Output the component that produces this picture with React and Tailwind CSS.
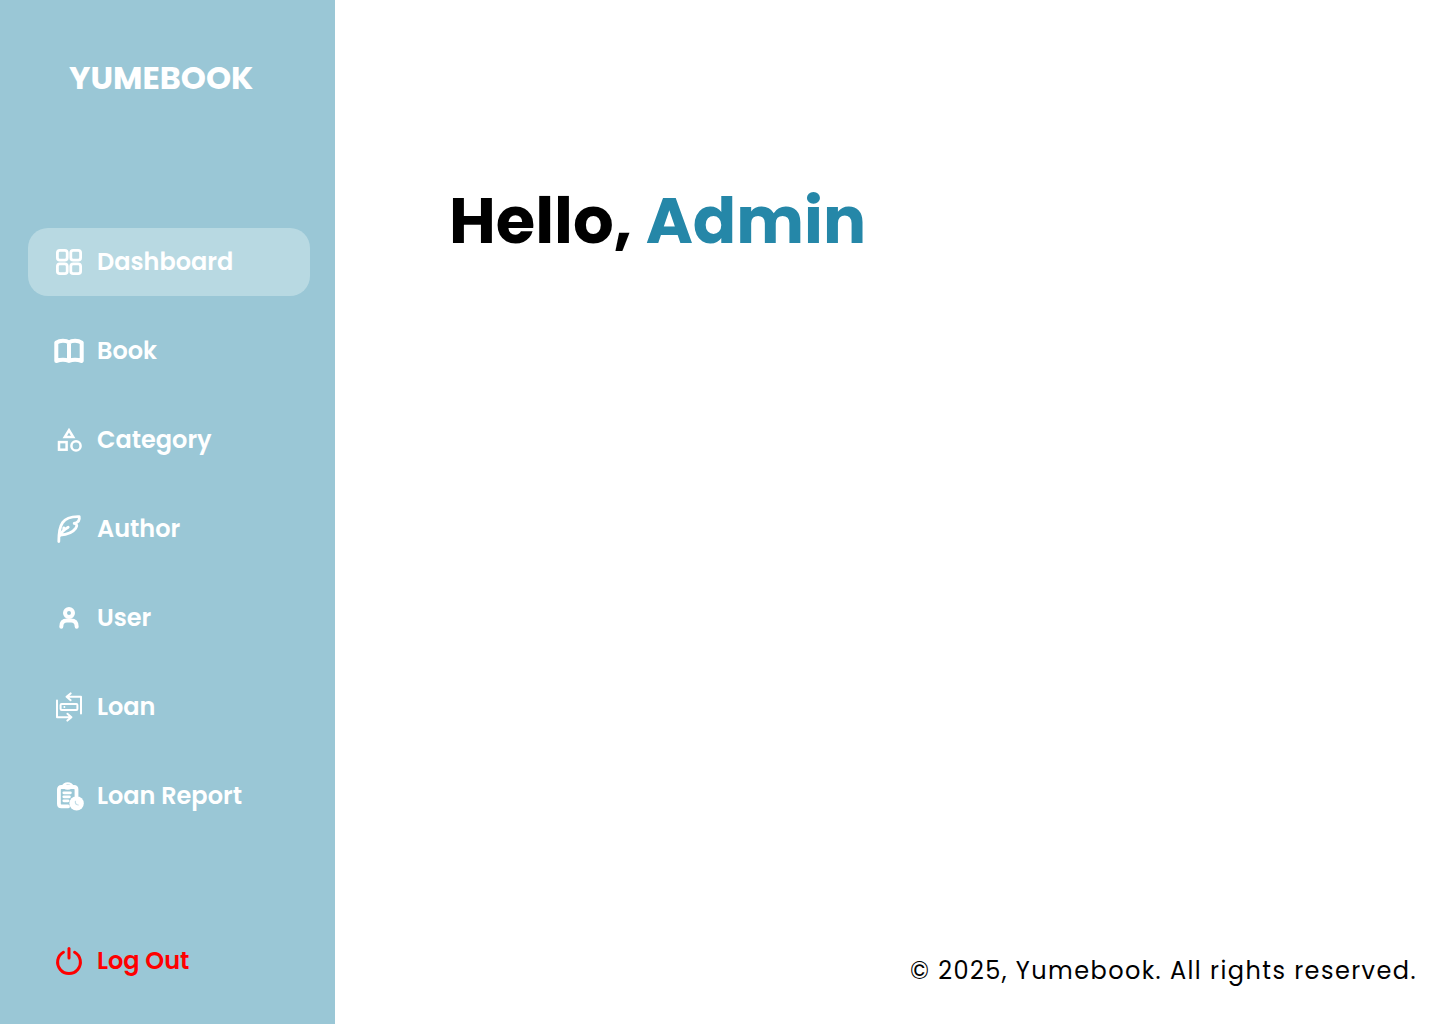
function Icon({ children, ...rest }) {
  return (
    <svg
      viewBox="0 0 30 30"
      fill="none"
      stroke="currentColor"
      strokeLinecap="round"
      strokeLinejoin="round"
      aria-hidden="true"
      className="size-[30px] shrink-0"
      {...rest}
    >
      {children}
    </svg>
  );
}

const DashboardIcon = () => (
  <Icon strokeWidth="2.8">
    <rect x="3.4" y="3.4" width="9.8" height="9.8" rx="2.4" />
    <rect x="16.8" y="3.4" width="9.8" height="9.8" rx="2.4" />
    <rect x="3.4" y="16.8" width="9.8" height="9.8" rx="2.4" />
    <rect x="16.8" y="16.8" width="9.8" height="9.8" rx="2.4" />
  </Icon>
);

const BookIcon = () => (
  <Icon strokeWidth="4">
    <path d="M15 6.6C12 4 6 4 2.3 6.6V25C6 23.8 12 23.8 15 25C18 23.8 24 23.8 27.7 25V6.6C24 4 18 4 15 6.6ZM15 6.6V25" />
  </Icon>
);

const CategoryIcon = () => (
  <Icon strokeWidth="2.5" strokeLinejoin="miter">
    <path d="M15 5.2L19.2 12.1H10.8Z" />
    <rect x="5" y="17.1" width="7.6" height="7.6" />
    <circle cx="22" cy="20.9" r="4.6" />
  </Icon>
);

const AuthorIcon = () => (
  <Icon strokeWidth="2.8">
    <path d="M4.8 27.6C4.8 11 8 2 25.2 2.6C25.9 6 24.8 8.4 20.2 9.4C23.6 10.2 23.2 12 21.6 14.4C18.6 18.6 14 20.6 6.2 21" />
    <path d="M6 21.2C7.2 18.2 9.6 15.8 14.2 13.2M9.8 14V16.6" />
  </Icon>
);

const UserIcon = () => (
  <Icon strokeWidth="4">
    <circle cx="15" cy="10" r="4" />
    <path d="M7.3 23.8C7.3 19.4 9.6 17.6 13 17.6H17C20.4 17.6 22.7 19.4 22.7 23.8" />
  </Icon>
);

const LoanIcon = () => (
  <Icon strokeWidth="2">
    <path d="M16.6 1.4L12.6 4.8L16.6 8.2M13 4.8H27V21.6" />
    <path d="M13.4 21.8L17.4 25.2L13.4 28.6M17 25.2H3V8.4" />
    <rect x="6.6" y="11.9" width="16.8" height="6.2" rx="1" />
    <path d="M10.4 14.9V15.1" />
  </Icon>
);

const LoanReportIcon = () => (
  <Icon strokeWidth="3.8">
    <path d="M14 25.4H7.4Q4.9 25.4 4.9 22.8V8.6Q4.9 6 7.4 6H20Q22.5 6 22.5 8.6V15" />
    <ellipse cx="13.7" cy="5" rx="4.4" ry="2.6" strokeWidth="2.4" />
    <path d="M9.8 11.8H16.4M9.8 15.8H15.4M9.8 19.8H14" strokeWidth="2.8" />
    <circle cx="22.6" cy="22.4" r="7.2" fill="currentColor" stroke="none" />
    <path d="M21.4 20.4Q21 23.6 24.2 24" stroke="#9ac7d6" strokeWidth="1.2" opacity="0.6" />
  </Icon>
);

const PowerIcon = () => (
  <Icon strokeWidth="3">
    <path d="M15 2.6V12" />
    <path d="M9.4 6.2A11.4 11.4 0 1 0 20.6 6.2" />
  </Icon>
);

const items = [
  { label: "Dashboard", icon: DashboardIcon },
  { label: "Book", icon: BookIcon },
  { label: "Category", icon: CategoryIcon },
  { label: "Author", icon: AuthorIcon },
  { label: "User", icon: UserIcon },
  { label: "Loan", icon: LoanIcon },
  { label: "Loan Report", icon: LoanReportIcon },
];

function Sidebar() {
  return (
    <aside className="flex w-[335px] shrink-0 flex-col bg-[#9ac7d6] pt-14 pr-[25px] pb-[29px] pl-7 text-white">
      <p className="pl-[41px] text-[32px] leading-[44px] font-bold">YUMEBOOK</p>
      <nav aria-label="Main" className="mt-32">
        <ul className="flex flex-col gap-[21px]">
          {items.map(({ label, icon: ItemIcon }, i) => (
            <li key={label}>
              <a
                href="#"
                aria-current={i === 0 ? "page" : undefined}
                className="flex items-center gap-[13px] rounded-[20px] px-[26px] py-4 text-2xl leading-9 font-semibold aria-[current=page]:bg-[#b8d9e2]"
              >
                <ItemIcon />
                {label}
              </a>
            </li>
          ))}
        </ul>
      </nav>
      <button
        type="button"
        className="mt-auto flex items-center gap-[13px] rounded-[20px] px-[26px] py-4 text-2xl leading-9 font-semibold text-[#ff0000]"
      >
        <PowerIcon />
        Log Out
      </button>
    </aside>
  );
}

export default function App() {
  return (
    <div className="flex min-h-screen bg-white font-['Poppins','Inter',sans-serif]">
      <Sidebar />
      <div className="flex min-w-0 flex-1 flex-col">
        <main className="flex-1 pt-[173px] pl-[114px]">
          <h1 className="text-[64px] leading-[96px] font-bold text-black">
            Hello, <span className="text-[#2587a8]">Admin</span>
          </h1>
        </main>
        <footer className="pr-[23px] pb-[35px] text-right text-2xl leading-9 tracking-[0.06em] text-black">
          © 2025, Yumebook. All rights reserved.
        </footer>
      </div>
    </div>
  );
}
